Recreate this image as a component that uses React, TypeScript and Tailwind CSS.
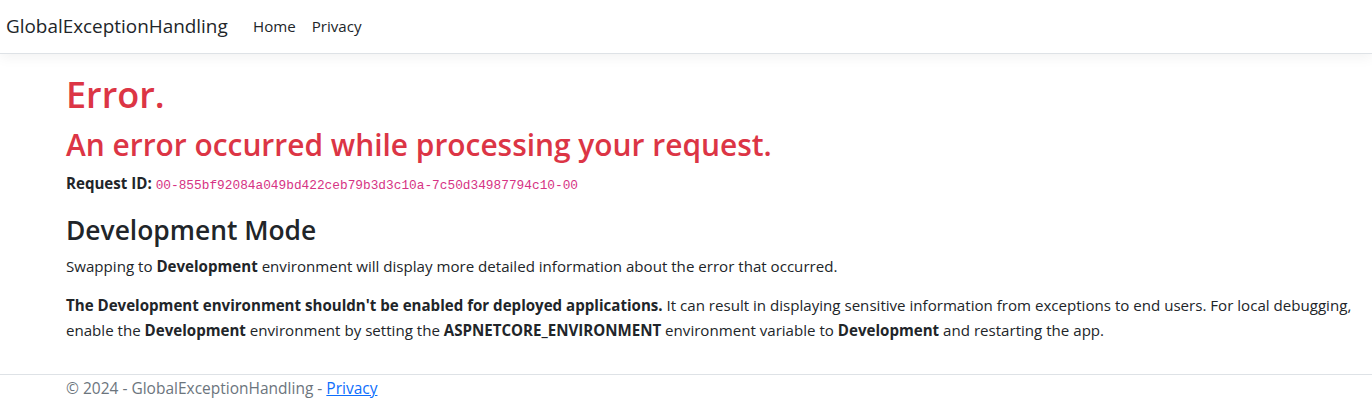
const sans = "font-['Open_Sans','Noto_Sans',sans-serif]"

function Header() {
  return (
    <header className="h-[54px] border-b border-[#dee2e6] bg-white shadow-[0_4px_12px_rgba(0,0,0,0.05)] flex items-center pl-[6px]">
      <a className="w-[239px] text-[18.9px] leading-[28px] text-[#212529] -mt-[2px]">GlobalExceptionHandling</a>
      <nav className="flex text-[15.1px] leading-[24px] text-[#212529] -mt-[2px]">
        <a className="px-[8px]">Home</a>
        <a className="px-[8px]">Privacy</a>
      </nav>
    </header>
  )
}

export default function App() {
  return (
    <div className={`${sans} bg-white text-[#212529] min-h-[402px]`}>
      <Header />
      <main className="pl-[66px] pr-[12px] pb-[31px]">
        <h1 className="mt-[18px] text-[36px] leading-[45px] font-semibold text-[#dc3545]">Error.</h1>
        <h2 className="mt-[10px] text-[29.9px] leading-[36px] font-semibold text-[#dc3545]">
          An error occurred while processing your request.
        </h2>
        <p className="mt-[8px] text-[15.1px] leading-[25px]">
          <strong className="font-bold">Request ID:</strong>{' '}
          <code className="font-['Liberation_Mono',monospace] text-[12.8px] text-[#d63384]">
            00-855bf92084a049bd422ceb79b3d3c10a-7c50d34987794c10-00
          </code>
        </p>
        <h3 className="mt-[16px] text-[26.4px] leading-[32px] font-semibold">Development Mode</h3>
        <p className="mt-[8px] text-[15.1px] leading-[25px]">
          Swapping to <strong className="font-bold">Development</strong> environment will display more detailed
          information about the error that occurred.
        </p>
        <p className="mt-[14px] text-[15.1px] leading-[25px]">
          <strong className="font-bold">The Development environment shouldn't be enabled for deployed applications.</strong>{' '}
          It can result in displaying sensitive information from exceptions to end users. For local debugging, enable
          the <strong className="font-bold">Development</strong> environment by setting the{' '}
          <strong className="font-bold">ASPNETCORE_ENVIRONMENT</strong> environment variable to{' '}
          <strong className="font-bold">Development</strong> and restarting the app.
        </p>
      </main>
      <footer className="border-t border-[#dee2e6] pt-[1px] pl-[66px] text-[15.5px] leading-[25px] text-[#6c757d]">
        © 2024 - GlobalExceptionHandling - <a className="text-[#0d6efd] underline">Privacy</a>
      </footer>
    </div>
  )
}
